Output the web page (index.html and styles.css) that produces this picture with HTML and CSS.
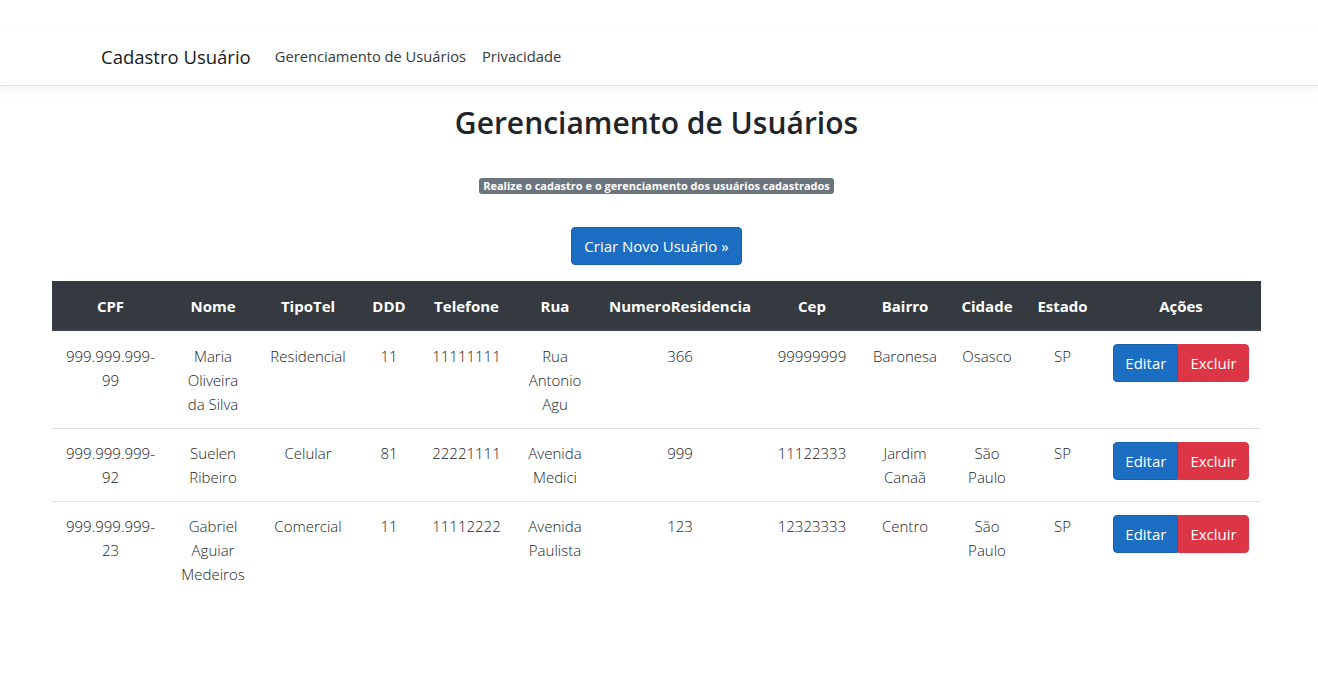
FILE: index.html
```html
<!DOCTYPE html>
<html lang="pt-BR">
<head>
<meta charset="utf-8">
<title>Gerenciamento de Usuários - Cadastro Usuário</title>
<link rel="stylesheet" href="styles.css">
</head>
<body>
<header class="site-header">
  <nav class="navbar">
    <div class="nav-inner">
      <a class="brand" href="#">Cadastro Usuário</a>
      <ul class="nav-links">
        <li><a class="nav-link" href="#">Gerenciamento de Usuários</a></li>
        <li><a class="nav-link" href="#">Privacidade</a></li>
      </ul>
    </div>
  </nav>
</header>
<main class="page">
  <h1 class="title">Gerenciamento de Usuários</h1>
  <p class="subtitle"><span class="badge">Realize o cadastro e o gerenciamento dos usuários cadastrados</span></p>
  <p class="actions"><a class="btn btn-primary" href="#">Criar Novo Usuário »</a></p>
  <table class="users">
    <colgroup>
      <col class="c-cpf"><col class="c-nome"><col class="c-tipo"><col class="c-ddd"><col class="c-tel"><col class="c-rua"><col class="c-num"><col class="c-cep"><col class="c-bairro"><col class="c-cidade"><col class="c-estado"><col class="c-acoes">
    </colgroup>
    <thead>
      <tr>
        <th>CPF</th><th>Nome</th><th>TipoTel</th><th>DDD</th><th>Telefone</th><th>Rua</th><th>NumeroResidencia</th><th>Cep</th><th>Bairro</th><th>Cidade</th><th>Estado</th><th class="acoes">Ações</th>
      </tr>
    </thead>
    <tbody>
      <tr>
        <td>999.999.999-99</td><td>Maria Oliveira da Silva</td><td>Residencial</td><td>11</td><td>11111111</td><td>Rua Antonio Agu</td><td>366</td><td>99999999</td><td>Baronesa</td><td>Osasco</td><td>SP</td>
        <td class="acoes"><div class="btn-group"><a class="btn btn-primary" href="#">Editar</a><a class="btn btn-danger" href="#">Excluir</a></div></td>
      </tr>
      <tr>
        <td>999.999.999-92</td><td>Suelen Ribeiro</td><td>Celular</td><td>81</td><td>22221111</td><td>Avenida Medici</td><td>999</td><td>11122333</td><td>Jardim Canaã</td><td>São Paulo</td><td>SP</td>
        <td class="acoes"><div class="btn-group"><a class="btn btn-primary" href="#">Editar</a><a class="btn btn-danger" href="#">Excluir</a></div></td>
      </tr>
      <tr>
        <td>999.999.999-23</td><td>Gabriel Aguiar Medeiros</td><td>Comercial</td><td>11</td><td>11112222</td><td>Avenida Paulista</td><td>123</td><td>12323333</td><td>Centro</td><td>São Paulo</td><td>SP</td>
        <td class="acoes"><div class="btn-group"><a class="btn btn-primary" href="#">Editar</a><a class="btn btn-danger" href="#">Excluir</a></div></td>
      </tr>
    </tbody>
  </table>
</main>
</body>
</html>
```
FILE: styles.css
```css
html, body {
  margin: 0;
  padding: 0;
}

body {
  font-family: "Open Sans", "Noto Sans", "Liberation Sans", sans-serif;
  font-size: 15px;
  line-height: 24px;
  color: #212529;
  background: #ffffff;
}

a {
  text-decoration: none;
}

.site-header {
  padding-top: 28px;
}

.navbar {
  background: #ffffff;
  border-bottom: 1px solid #dee2e6;
  box-shadow: 0 4px 12px rgba(0, 0, 0, 0.05);
  padding: 8px 0 9px;
}

.nav-inner {
  max-width: 1116px;
  margin: 0 auto;
  padding: 0 12px;
  display: flex;
  align-items: center;
}

.brand {
  font-size: 18.5px;
  line-height: 30px;
  padding: 6px 0 4px;
  margin-right: 16px;
  color: #1a1a1a;
}

.nav-links {
  list-style: none;
  margin: 0;
  padding: 0;
  display: flex;
}

.nav-link {
  display: block;
  padding: 8px;
  color: #343a40;
  font-size: 14.7px;
}

.page {
  width: 1209px;
  margin-left: 52px;
  padding-top: 16px;
  text-align: center;
}

.title {
  margin: 2px 0 0;
  font-size: 30px;
  line-height: 38px;
  font-weight: 600;
  color: #212529;
}

.subtitle {
  margin: 36px 0 0;
  line-height: 16px;
}

.badge {
  display: inline-block;
  background: #6c757d;
  color: #ffffff;
  font-size: 11px;
  font-weight: 700;
  line-height: 12px;
  padding: 2px 4px;
  border-radius: 3px;
  vertical-align: top;
}

.actions {
  margin: 33px 0 0;
  line-height: 0;
}

.btn {
  display: inline-block;
  font-size: 15px;
  line-height: 24px;
  padding: 6px 12px;
  border: 1px solid transparent;
  border-radius: 4px;
  color: #ffffff;
  font-weight: 400;
}

.btn-primary {
  background: #1b6ec2;
  border-color: #1861ac;
}

.btn-danger {
  background: #dc3545;
  border-color: #dc3545;
}

.users {
  margin-top: 16px;
  width: 1209px;
  table-layout: fixed;
  border-collapse: collapse;
}

.c-cpf { width: 117px; }
.c-nome { width: 88px; }
.c-tipo { width: 102px; }
.c-ddd { width: 60px; }
.c-tel { width: 95px; }
.c-rua { width: 82px; }
.c-num { width: 168px; }
.c-cep { width: 96px; }
.c-bairro { width: 90px; }
.c-cidade { width: 74px; }
.c-estado { width: 77px; }
.c-acoes { width: 160px; }

.users th {
  background: #343a40;
  color: #ffffff;
  font-weight: 700;
  padding: 13px 6px 11px;
  border-bottom: 2px solid #3d444b;
  white-space: nowrap;
}

.users td {
  padding: 12px 10px;
  vertical-align: top;
  border-top: 1px solid #dee2e6;
  font-weight: 300;
  color: #212529;
}

.users tbody tr:first-child td {
  border-top: none;
  padding-top: 13px;
}

.users td.acoes {
  padding: 13px 12px 12px;
}

.btn-group {
  display: inline-flex;
  vertical-align: top;
}

.btn-group .btn {
  border-radius: 0;
  padding: 6px 11px;
}

.btn-group .btn:first-child {
  border-radius: 4px 0 0 4px;
}

.btn-group .btn:last-child {
  border-radius: 0 4px 4px 0;
}
```
